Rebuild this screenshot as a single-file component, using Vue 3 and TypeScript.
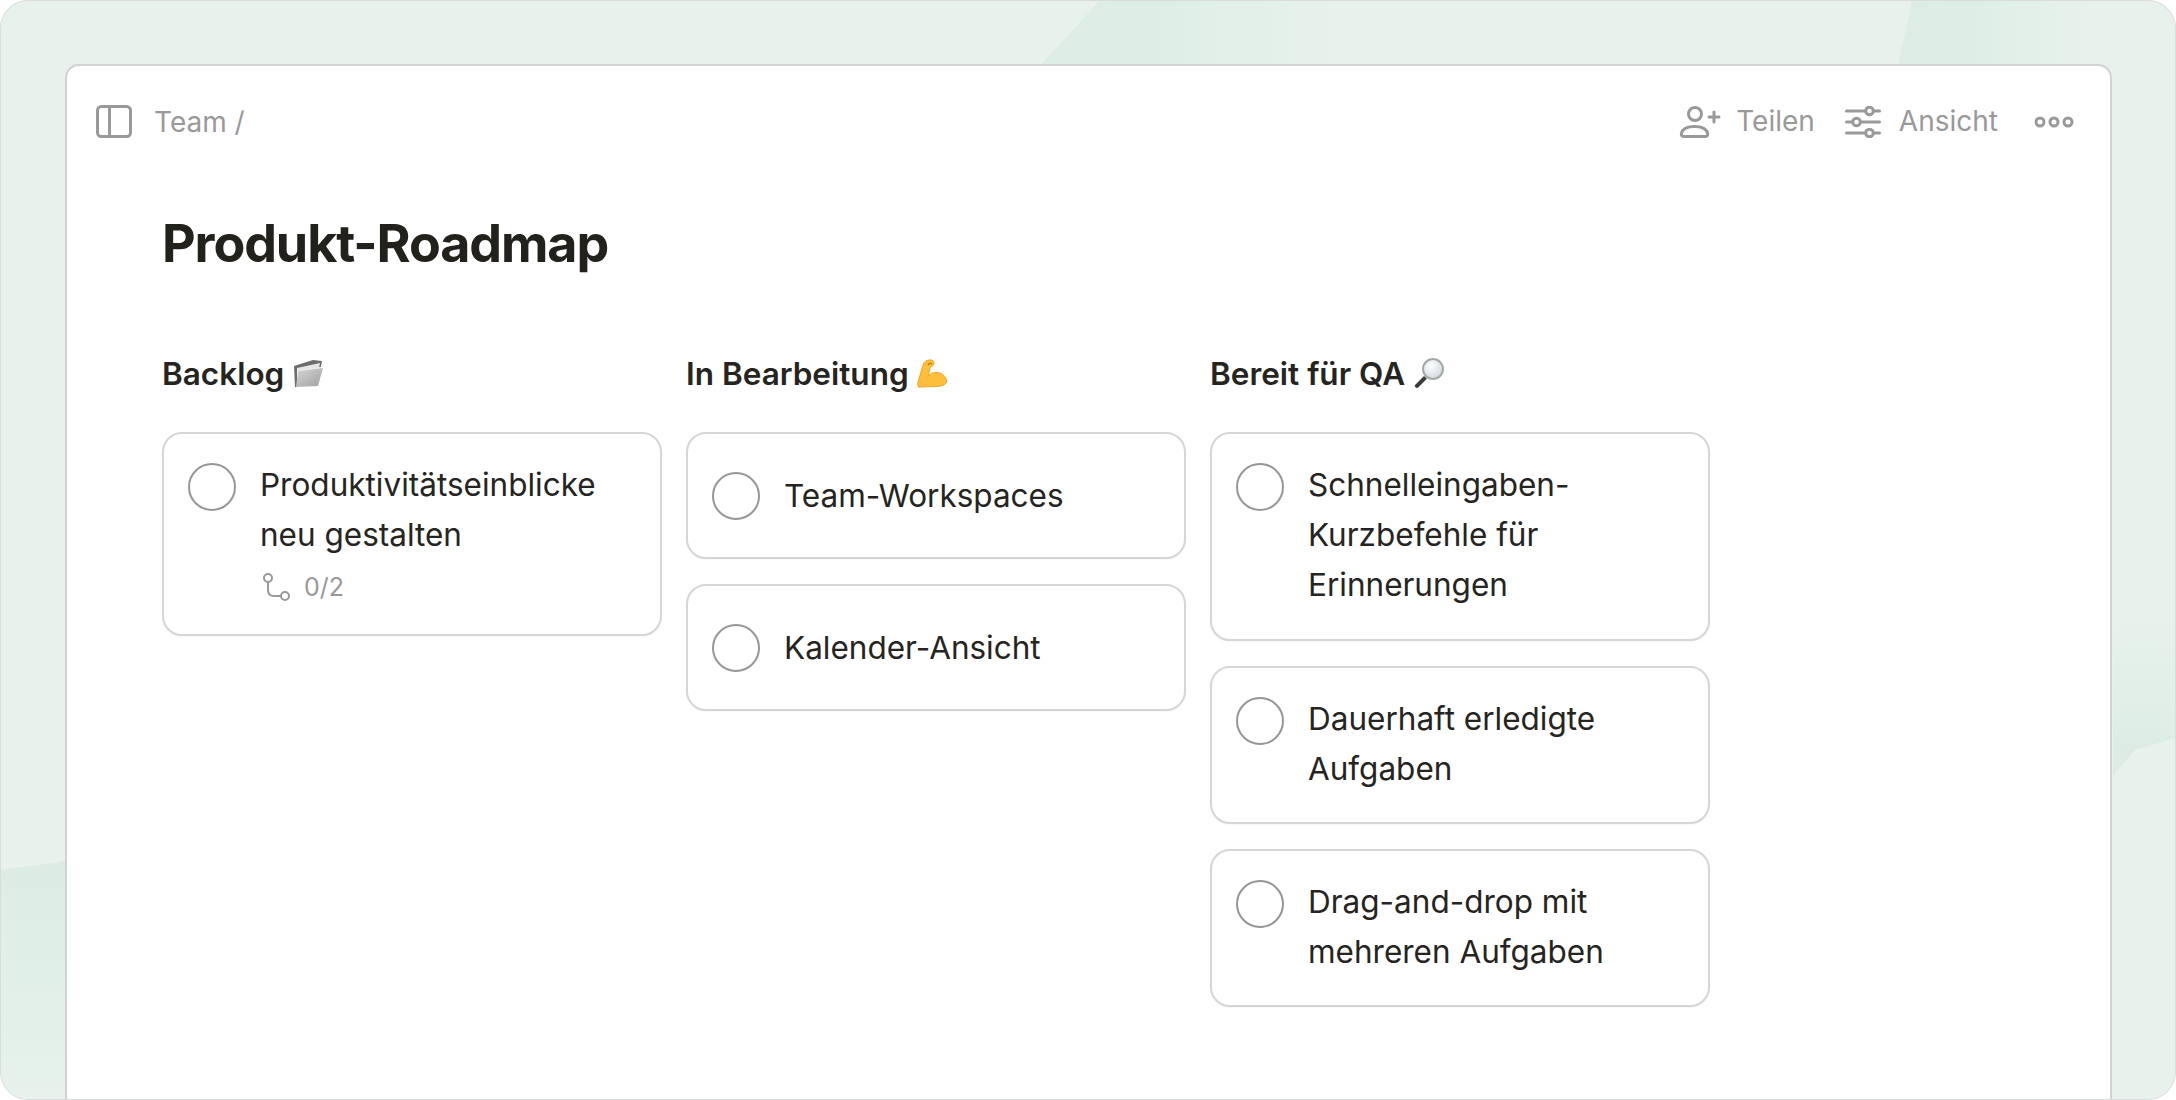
<script setup lang="ts">
interface Card { lines: string[]; meta?: string }
interface Col { title: string; icon: string; cards: Card[] }
const columns: Col[] = [
  { title: 'Backlog', icon: 'folder', cards: [{ lines: ['Produktivitätseinblicke', 'neu gestalten'], meta: '0/2' }] },
  { title: 'In Bearbeitung', icon: 'muscle', cards: [{ lines: ['Team-Workspaces'] }, { lines: ['Kalender-Ansicht'] }] },
  { title: 'Bereit für QA', icon: 'lens', cards: [
    { lines: ['Schnelleingaben-', 'Kurzbefehle für', 'Erinnerungen'] },
    { lines: ['Dauerhaft erledigte', 'Aufgaben'] },
    { lines: ['Drag-and-drop mit', 'mehreren Aufgaben'] },
  ] },
]
</script>

<template>
  <div class="frame">
    <svg class="wash" width="2176" height="1100" viewBox="0 0 2176 1100" aria-hidden="true">
      <defs>
        <linearGradient id="fadeA" x1="0" y1="0" x2="1" y2="0">
          <stop offset="0" stop-color="#ddede6" />
          <stop offset="0.4" stop-color="#deeee6" />
          <stop offset="1" stop-color="#e7f2ec" />
        </linearGradient>
        <linearGradient id="fadeB" x1="0" y1="0" x2="0" y2="1">
          <stop offset="0" stop-color="#dcece5" />
          <stop offset="0.5" stop-color="#e0efe8" />
          <stop offset="1" stop-color="#e7f2ec" />
        </linearGradient>
        <linearGradient id="fadeC" x1="0" y1="0" x2="0" y2="1">
          <stop offset="0" stop-color="#e7f2ec" />
          <stop offset="0.85" stop-color="#dcece5" />
          <stop offset="1" stop-color="#dcece5" />
        </linearGradient>
      </defs>
      <polygon points="1100,0 1340,0 1340,66 1040,66" fill="url(#fadeA)" />
      <polygon points="1912,0 2090,0 2090,66 1898,66" fill="url(#fadeA)" />
      <polygon points="0,870 60,862 65,860 65,1100 0,1100" fill="url(#fadeB)" />
      <polygon points="2113,620 2176,620 2176,738 2135,750 2113,775" fill="url(#fadeC)" />
    </svg>
    <main class="sheet">
      <header class="bar">
        <div class="crumbs">
          <svg class="panel" width="36" height="33" viewBox="0 0 36 33" fill="none" stroke="#999" stroke-width="3">
            <rect x="1.500" y="1.500" width="33" height="30" rx="4" />
            <path d="M13.500 1.500v30" />
          </svg>
          <span>Team /</span>
        </div>
        <div class="actions">
          <span class="action">
            <svg width="42" height="32" viewBox="0 0 42 32" fill="none" stroke="#999" stroke-width="3" stroke-linecap="round">
              <circle cx="16" cy="8" r="6.500" />
              <path d="M5 30.500h21c2 0 3-1.200 2.600-3-1-4.400-6-7-13.100-7S3.400 23.100 2.400 27.500c-.4 1.800.6 3 2.600 3Z" />
              <path d="M30 11h10M35 6v10" />
            </svg>
            <span>Teilen</span>
          </span>
          <span class="action">
            <svg width="36" height="32" viewBox="0 0 36 32" fill="none" stroke="#999" stroke-width="3" stroke-linecap="round">
              <path d="M1.500 5h18M29 5h5.500M1.500 16h5.500M16 16h18.500M1.500 27h18M29 27h5.500" />
              <circle cx="24.500" cy="5" r="3.800" />
              <circle cx="11.500" cy="16" r="3.800" />
              <circle cx="24.500" cy="27" r="3.800" />
            </svg>
            <span>Ansicht</span>
          </span>
          <svg class="more" width="40" height="12" viewBox="0 0 40 12" fill="none" stroke="#999" stroke-width="3">
            <circle cx="6" cy="6" r="4" />
            <circle cx="20" cy="6" r="4" />
            <circle cx="34" cy="6" r="4" />
          </svg>
        </div>
      </header>
      <section class="content">
        <h1>Produkt-Roadmap</h1>
        <div class="board">
          <div v-for="col in columns" :key="col.title" class="column">
            <h2>
              <span>{{ col.title }}</span>
              <svg v-if="col.icon === 'folder'" width="32" height="30" viewBox="0 0 32 30">
                <defs>
                  <linearGradient id="folderFront" x1="0" y1="0" x2="1" y2="1">
                    <stop offset="0" stop-color="#d6d6d6" />
                    <stop offset="1" stop-color="#a0a0a0" />
                  </linearGradient>
                </defs>
                <path d="M2 8l19-6 9 1-1 6-24 3 0 17-2 0Z" fill="#6e6e6e" />
                <path d="M5 10l23-5-1 5-22 3Z" fill="#e6e6e6" />
                <path d="M6 13l25-3-5 18-22 1Z" fill="url(#folderFront)" />
              </svg>
              <svg v-else-if="col.icon === 'muscle'" width="30" height="30" viewBox="0 0 32 30">
                <path d="M2 29c-1.500-.6-1.500-2-1-4L6 8C7 4.500 8 2.500 11 1.500c3-1 6.500-.5 7 2 .5 2-.5 4-2.500 4.500l-1.500 1-2 9.500c2-3 5.500-4.500 10-4 5 .5 9 4.500 9.500 8.500.3 2.500-1 4-3.500 5-3 1.200-7 1.500-11 1.500-6 0-11 .5-16 .5Z" fill="#fcbf3c" stroke="#ee9f1c" stroke-width="1" />
                <path d="M12 6c1-1 2.500-1.500 3.500-1" fill="none" stroke="#c27d12" stroke-width="1.500" stroke-linecap="round" />
              </svg>
              <svg v-else width="32" height="32" viewBox="0 0 32 32">
                <defs>
                  <radialGradient id="lensGlass" cx="0.4" cy="0.35" r="0.7">
                    <stop offset="0" stop-color="#ffffff" />
                    <stop offset="1" stop-color="#cfd8dc" />
                  </radialGradient>
                </defs>
                <path d="M11 19L2.500 27.500c-1 1-.8 2 0 2.800s2 1 2.900 0l8.500-8.500Z" fill="#3a3a3a" />
                <circle cx="20" cy="12" r="10" fill="url(#lensGlass)" stroke="#a3a8a8" stroke-width="2" />
              </svg>
            </h2>
            <div class="stack">
              <article
                v-for="card in col.cards"
                :key="card.lines[0]"
                class="card"
                :class="{ single: card.lines.length === 1, triple: card.lines.length === 3 }"
              >
                <span class="check"></span>
                <div class="body">
                  <p v-for="line in card.lines" :key="line">{{ line }}</p>
                  <div v-if="card.meta" class="meta">
                    <svg width="28" height="28" viewBox="0 0 28 28" fill="none" stroke="#999" stroke-width="2">
                      <circle cx="6" cy="5" r="4" />
                      <circle cx="23" cy="23" r="4" />
                      <path d="M6 9v8c0 4 2.500 6 6 6h7" />
                    </svg>
                    <span>{{ card.meta }}</span>
                  </div>
                </div>
              </article>
            </div>
          </div>
        </div>
      </section>
    </main>
  </div>
</template>

<style>
html, body { margin: 0; background: #fff; }
</style>

<style scoped>
.frame {
  position: relative;
  box-sizing: border-box;
  width: 2176px;
  height: 1100px;
  padding: 63px 63px 0 64px;
  overflow: hidden;
  border: 1px solid #d9dcda;
  border-radius: 28px;
  background: #e7f2ec;
  font-family: Inter, "Liberation Sans", sans-serif;
}
.wash { position: absolute; left: -1px; top: -1px; }
.sheet {
  position: relative;
  box-sizing: border-box;
  height: 1040px;
  background: #fff;
  border: 2px solid #d2d2d2;
  border-radius: 14px 14px 0 0;
}
.bar {
  display: flex;
  justify-content: space-between;
  align-items: center;
  height: 35px;
  padding: 38px 36px 0 29px;
  color: #999;
  font-size: 28px;
}
.crumbs { display: flex; align-items: center; gap: 22px; }
.panel { display: block; }
.actions { display: flex; align-items: center; }
.action { display: flex; align-items: center; gap: 15px; margin-right: 30px; }
.action > span { position: relative; top: -1px; }
.action svg { display: block; }
.action + .action { gap: 18px; margin-right: 36px; }
.more { display: block; }
.content { padding: 69px 0 0 95px; }
h1 {
  margin: 0;
  height: 72px;
  font-size: 52px;
  line-height: 72px;
  font-weight: 700;
  color: #23211c;
  letter-spacing: -1.1px;
}
.board { display: flex; gap: 24px; margin-top: 73px; align-items: flex-start; }
.column { width: 500px; }
h2 {
  display: flex;
  align-items: center;
  gap: 8px;
  height: 40px;
  margin: 0 0 39px;
  font-size: 31.5px;
  font-weight: 600;
  color: #25241f;
}
.stack { display: flex; flex-direction: column; gap: 25px; }
.card {
  display: flex;
  align-items: flex-start;
  gap: 24px;
  box-sizing: border-box;
  padding: 26px 24px 28px 24px;
  background: #fff;
  border: 2px solid #d6d6d6;
  border-radius: 20px;
  box-shadow: 0 1px 2px rgba(0, 0, 0, 0.04);
}
.card.single { align-items: center; min-height: 127px; padding-top: 0; padding-bottom: 0; }
.card.triple { padding-bottom: 29px; }
.check {
  flex: none;
  box-sizing: border-box;
  width: 48px;
  height: 48px;
  margin-top: 3px;
  border: 2px solid #969696;
  border-radius: 50%;
}
.single .check { margin-top: 0; }
p {
  margin: 0;
  font-size: 31.5px;
  line-height: 50px;
  color: #25241f;
}
.meta {
  display: flex;
  align-items: center;
  gap: 14px;
  margin: 12px 0 4px 2px;
  height: 30px;
  font-size: 25px;
  color: #999;
}
.meta svg { display: block; }
</style>
